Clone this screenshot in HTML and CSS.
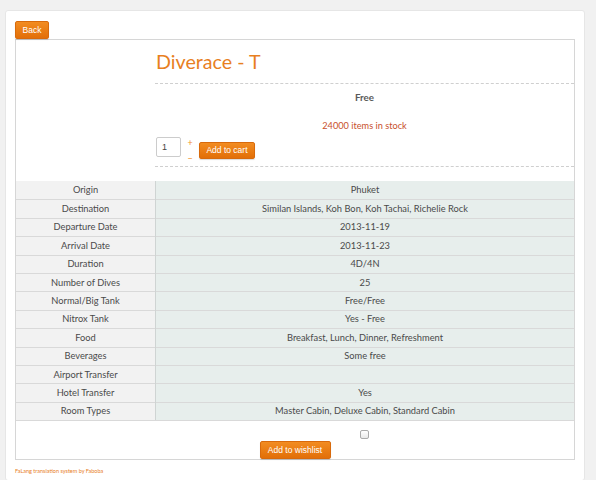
FILE: index.html
```html
<!DOCTYPE html>
<html>
<head>
<meta charset="utf-8">
<link rel="stylesheet" href="styles.css">
</head>
<body>
<div class="card">
  <div class="back-row"><button class="btn btn-back">Back</button></div>
  <div class="product">
    <div class="top">
      <div class="image-col"></div>
      <div class="info-col">
        <h1 class="title">Diverace - T</h1>
        <div class="dashed"></div>
        <div class="price">Free</div>
        <div class="stock">24000 items in stock</div>
        <div class="cart-row">
          <input class="qty" type="text" value="1">
          <div class="qty-ctrl"><span>+</span><span>&minus;</span></div>
          <button class="btn btn-cart">Add to cart</button>
        </div>
        <div class="dashed"></div>
      </div>
    </div>
    <table class="specs">
      <tr><td class="k">Origin</td><td class="v">Phuket</td></tr>
      <tr><td class="k">Destination</td><td class="v">Similan Islands, Koh Bon, Koh Tachai, Richelie Rock</td></tr>
      <tr><td class="k">Departure Date</td><td class="v">2013-11-19</td></tr>
      <tr><td class="k">Arrival Date</td><td class="v">2013-11-23</td></tr>
      <tr><td class="k">Duration</td><td class="v">4D/4N</td></tr>
      <tr><td class="k">Number of Dives</td><td class="v">25</td></tr>
      <tr><td class="k">Normal/Big Tank</td><td class="v">Free/Free</td></tr>
      <tr><td class="k">Nitrox Tank</td><td class="v">Yes - Free</td></tr>
      <tr><td class="k">Food</td><td class="v">Breakfast, Lunch, Dinner, Refreshment</td></tr>
      <tr><td class="k">Beverages</td><td class="v">Some free</td></tr>
      <tr><td class="k">Airport Transfer</td><td class="v"></td></tr>
      <tr><td class="k">Hotel Transfer</td><td class="v">Yes</td></tr>
      <tr><td class="k">Room Types</td><td class="v">Master Cabin, Deluxe Cabin, Standard Cabin</td></tr>
    </table>
    <div class="wish">
      <div class="wish-check"><span class="checkbox"></span></div>
      <button class="btn btn-wish">Add to wishlist</button>
    </div>
  </div>
  <div class="footer">FaLang translation system by Faboba</div>
</div>
</body>
</html>
```

FILE: styles.css
```css
html, body {
  margin: 0;
  padding: 0;
}
body {
  background: #f1f1f1;
  font-family: Lato, "Noto Sans", sans-serif;
  color: #4a4a4a;
  height: 480px;
  overflow: hidden;
}
.card {
  box-sizing: border-box;
  margin: 10px 11px 0 5px;
  background: #fff;
  border: 1px solid #e6e6e6;
  border-radius: 3px;
  padding: 10px 9px 0 9px;
  height: 471px;
}
.back-row {
  display: flex;
  height: 18px;
}
.btn {
  font-family: "Liberation Sans", Arial, sans-serif;
  color: #fff;
  background: linear-gradient(#f28c21, #e26f08);
  border: 1px solid #d86a0c;
  border-radius: 2px;
  padding: 0;
  font-size: 8.5px;
  line-height: 15px;
  box-shadow: 0 1px 1px rgba(0,0,0,0.15);
}
.btn-back {
  width: 34px;
  height: 18px;
}
.product {
  border: 1px solid #d6d6d6;
  width: 558px;
}
.top {
  display: flex;
}
.image-col {
  width: 139px;
}
.info-col {
  flex: 1;
}
.title {
  margin: 0;
  padding: 10px 0 0 1px;
  height: 33px;
  font-weight: normal;
  font-size: 19.7px;
  line-height: 24px;
  color: #e8801f;
}
.dashed {
  border-top: 1px dashed #cfcfcf;
}
.price {
  text-align: center;
  font-size: 9.8px;
  font-weight: bold;
  color: #5a5a5a;
  margin-top: 7px;
  line-height: 12px;
}
.stock {
  text-align: center;
  font-size: 9.2px;
  color: #c8502c;
  margin-top: 17px;
  line-height: 12px;
}
.cart-row {
  display: flex;
  align-items: flex-start;
  margin: 5px 0 9px 1px;
  height: 20px;
}
.qty {
  box-sizing: border-box;
  width: 25px;
  height: 20px;
  border: 1px solid #ccc;
  border-radius: 2px;
  font-family: "Liberation Sans", Arial, sans-serif;
  font-size: 9px;
  padding: 0 0 0 5px;
  color: #444;
  margin: 0;
}
.qty-ctrl {
  display: flex;
  flex-direction: column;
  width: 18px;
  align-items: center;
  color: #f0902c;
  font-size: 9px;
  line-height: 9px;
  padding-top: 1px;
  gap: 7px;
}
.btn-cart {
  width: 56px;
  height: 17px;
  margin-top: 5px;
}
.specs {
  width: 100%;
  border-collapse: collapse;
  margin-top: 14px;
  font-size: 9.3px;
}
.specs td {
  height: 17.4px;
  padding: 0;
  text-align: center;
  border-top: 1px solid #d9d9d9;
  line-height: 12px;
}
.specs tr:first-child td {
  border-top: none;
  height: 18.4px;
}
.specs .k {
  width: 139px;
  background: #f2f2f2;
  border-right: 1px solid #cfd4d3;
}
.specs .v {
  background: #e7eeec;
}
.specs tr:last-child td {
  border-bottom: 1px solid #d9d9d9;
}
.wish {
  display: flex;
  flex-direction: column;
  align-items: center;
}
.wish-check {
  align-self: stretch;
  padding-left: 139px;
  display: flex;
  justify-content: center;
  padding-top: 9px;
}
.checkbox {
  width: 7px;
  height: 7px;
  border: 1px solid #aaa;
  border-radius: 2px;
  background: linear-gradient(#fff, #e9e9e9);
}
.btn-wish {
  width: 71px;
  height: 18px;
  margin-top: 2px;
}
.footer {
  font-size: 5.5px;
  color: #e8801f;
  margin-top: 7px;
  line-height: 8px;
}
```
